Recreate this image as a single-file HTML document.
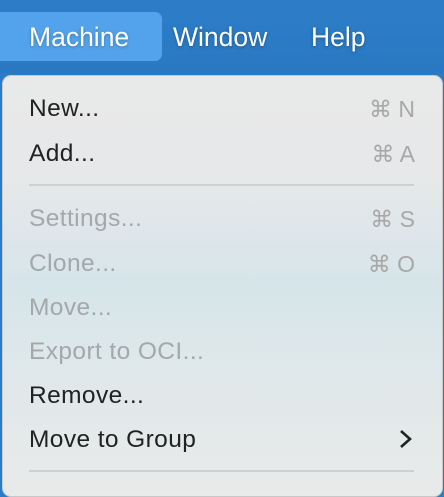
<html><head><style>
body{margin:0;width:444px;height:480px;overflow:hidden;background:#2b7cc6;font-family:"Liberation Sans",sans-serif;position:relative}
.bar{position:absolute;left:0;top:0;width:444px;height:74px;background:linear-gradient(#2c7dc8,#2a78c2)}
.hl{position:absolute;left:0;top:12px;width:162px;height:49px;background:#53a3ec;border-radius:0 7px 7px 0}
.mt{position:absolute;top:22px;color:#fff;font-size:26.5px;text-shadow:0 1px 3px rgba(0,0,0,.25)}
.menu{position:absolute;left:2px;top:75px;width:439px;height:420px;border-radius:9px;border:1px solid #c8c8c8;background:linear-gradient(180deg,#e9e9e9 0%,#e6e8e9 25%,#d6e5ea 50%,#dfe8ea 70%,#e9eaea 100%)}
.it{position:absolute;left:29px;font-size:24.5px;letter-spacing:0.4px;color:#222;height:30px;line-height:30px;margin-top:1px}
.d{color:#a3a8aa}
.sc{position:absolute;right:29px;font-size:23px;color:#a8a8a8;height:30px;line-height:30px;margin-top:1px}
.sep{position:absolute;left:29px;width:385px;height:2px;background:#cdd0d1}
</style></head><body>
<div class="bar"></div><div class="hl"></div>
<div class="mt" style="left:29px">Machine</div>
<div class="mt" style="left:173px">Window</div>
<div class="mt" style="left:311px">Help</div>
<div class="menu"></div>
<div class="it" style="top:93px">New...</div><div class="sc" style="top:93px">⌘ N</div>
<div class="it" style="top:138px">Add...</div><div class="sc" style="top:138px">⌘ A</div>
<div class="sep" style="top:184px"></div>
<div class="it d" style="top:203px">Settings...</div><div class="sc" style="top:203px">⌘ S</div>
<div class="it d" style="top:248px">Clone...</div><div class="sc" style="top:248px">⌘ O</div>
<div class="it d" style="top:292px">Move...</div>
<div class="it d" style="top:336px">Export to OCI...</div>
<div class="it" style="top:380px">Remove...</div>
<div class="it" style="top:424px">Move to Group</div>
<svg style="position:absolute;left:398px;top:429px" width="16" height="20"><path d="M3 2 L12 10 L3 18" fill="none" stroke="#222" stroke-width="2.6"/></svg>
<div class="sep" style="top:470px"></div>
</body></html>
